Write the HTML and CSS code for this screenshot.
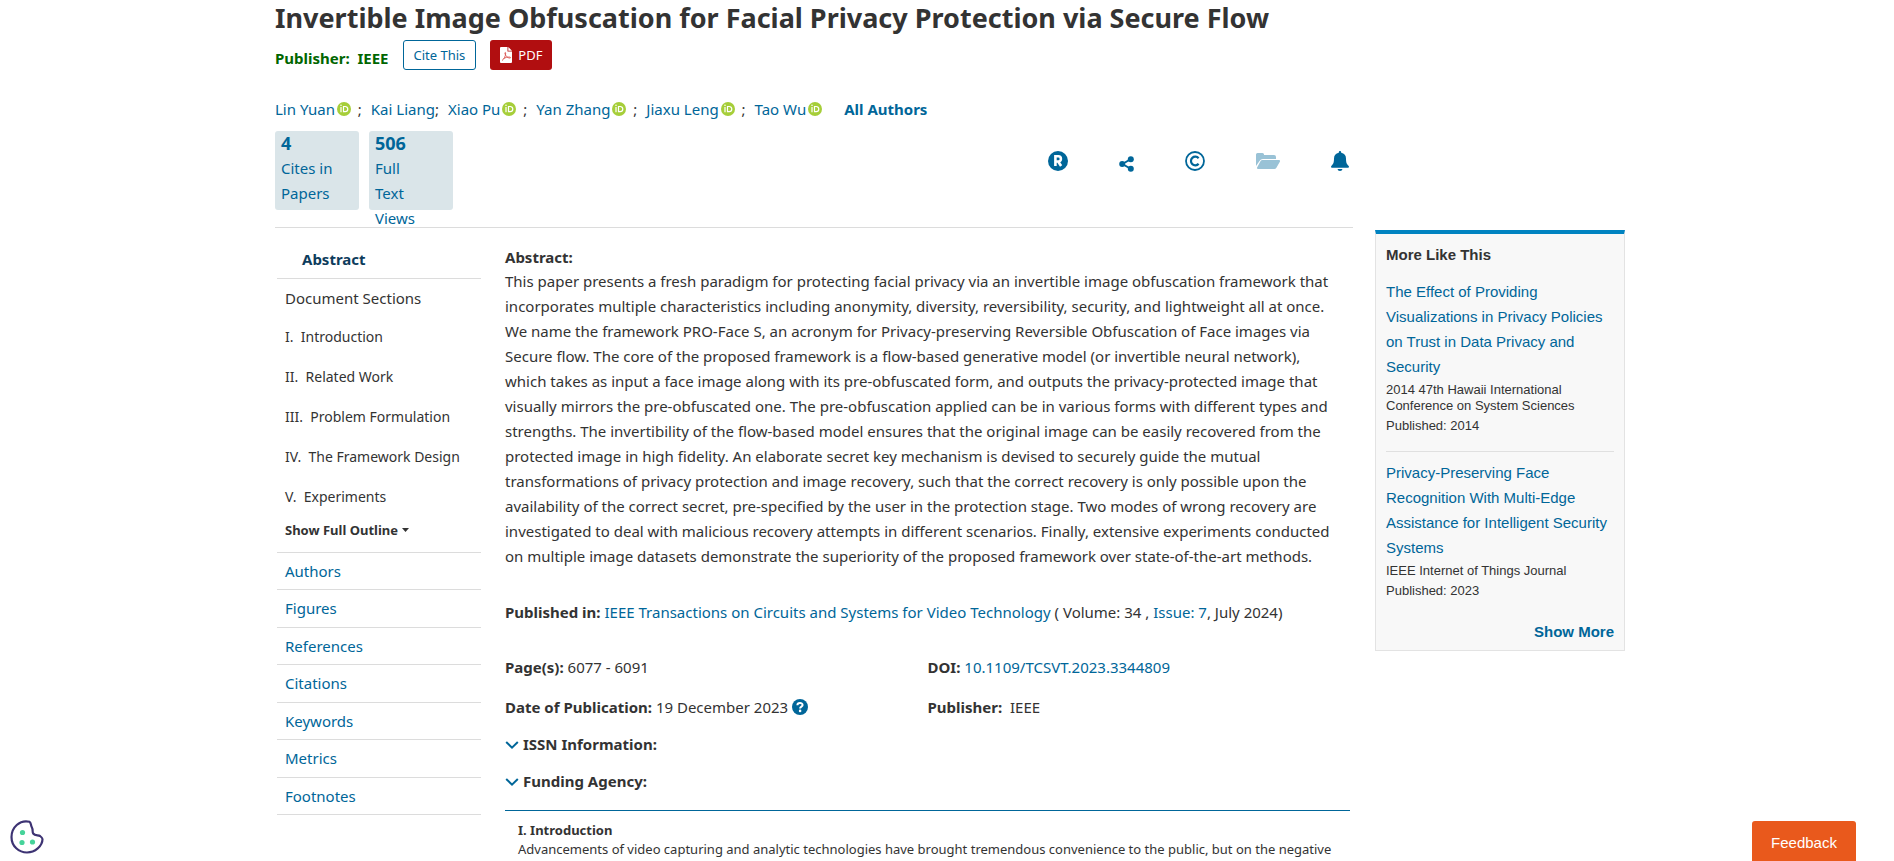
FILE: index.html
```html
<!DOCTYPE html>
<html lang="en">
<head>
<meta charset="utf-8">
<title>Invertible Image Obfuscation for Facial Privacy Protection via Secure Flow</title>
<link rel="stylesheet" href="styles.css">
</head>
<body>
<svg class="defs" aria-hidden="true">
  <symbol id="orcid" viewBox="0 0 16 16">
    <circle cx="8" cy="8" r="7" fill="#a6ce39"/>
    <path d="M5 6v5.200M7.500 5.500h1.700a2.600 2.600 0 0 1 0 5.200H7.500z" fill="none" stroke="#fff" stroke-width="1.200"/>
    <circle cx="5" cy="4.300" r=".8" fill="#fff"/>
  </symbol>
  <symbol id="chevron" viewBox="0 0 14 10">
    <path d="M1.200 2l5.800 5.600L12.800 2" fill="none" stroke="#069" stroke-width="2"/>
  </symbol>
</svg>
<div class="page">
  <header class="doc-head">
    <h1>Invertible Image Obfuscation for Facial Privacy Protection via Secure Flow</h1>
    <div class="publisher-row">
      <span class="publisher">Publisher:&nbsp; IEEE</span>
      <button class="btn btn-cite" type="button">Cite This</button>
      <button class="btn btn-pdf" type="button">
        <svg width="12" height="16" viewBox="0 0 12 16"><path d="M0 1a1 1 0 0 1 1-1h6.500v4.500H12V15a1 1 0 0 1-1 1H1a1 1 0 0 1-1-1z" fill="#fff"/><path d="M8.300 0L12 3.700H8.300z" fill="#fff"/><path d="M2 13.500c1.500-.5 4-5 3.700-7.500-.1-.8-1-.6-.8.300.4 2.500 2.800 4.800 5 4.800.9 0 .8-.9 0-1-2-.2-4.700.5-6.300 1.400" fill="none" stroke="#d9534f" stroke-width=".9"/></svg>
        PDF</button>
    </div>
    <div class="authors">
      <span><a href="#">Lin Yuan</a><svg class="orcid"><use href="#orcid"/></svg> ;</span>
      <span><a href="#">Kai Liang</a>;</span>
      <span><a href="#">Xiao Pu</a><svg class="orcid"><use href="#orcid"/></svg> ;</span>
      <span><a href="#">Yan Zhang</a><svg class="orcid"><use href="#orcid"/></svg> ;</span>
      <span><a href="#">Jiaxu Leng</a><svg class="orcid"><use href="#orcid"/></svg> ;</span>
      <span><a href="#">Tao Wu</a><svg class="orcid"><use href="#orcid"/></svg></span>
      <a class="all-authors" href="#">All Authors</a>
    </div>
  </header>

  <div class="columns">
    <div class="left">
      <div class="metrics-row">
        <div class="metrics">
          <button class="metric" type="button"><b>4</b><span>Cites in</span><span>Papers</span></button>
          <button class="metric" type="button"><b>506</b><span>Full</span><span>Text</span><span>Views</span></button>
        </div>
        <div class="tools">
          <a href="#" aria-label="References"><svg width="20" height="20" viewBox="0 0 20 20"><circle cx="10" cy="10" r="10" fill="#069"/><path d="M7.400 15V5.300h2.900a2.600 2.600 0 0 1 0 5.200H7.400M10.200 10.500l2.900 4.500" fill="none" stroke="#fff" stroke-width="2.600"/></svg></a>
          <a class="share" href="#" aria-label="Share"><svg width="15" height="16" viewBox="0 0 15 16"><path d="M12 3L3.500 8l8.500 5" fill="none" stroke="#069" stroke-width="2"/><circle cx="11.800" cy="3.200" r="3" fill="#069"/><circle cx="3.200" cy="8" r="3" fill="#069"/><circle cx="11.800" cy="12.800" r="3" fill="#069"/></svg></a>
          <a href="#" aria-label="Copyright"><svg width="20" height="20" viewBox="0 0 20 20"><circle cx="10" cy="10" r="9" fill="none" stroke="#069" stroke-width="1.800"/><path d="M13.600 7.300a4.300 4.300 0 1 0 0 5.400" fill="none" stroke="#069" stroke-width="2.200"/></svg></a>
          <a href="#" aria-label="Save to folder"><svg width="24" height="16" viewBox="0 0 24 16"><path d="M0 13V1.500A1.500 1.500 0 0 1 1.500 0h5A1.500 1.500 0 0 1 8 1.500V2h10a2 2 0 0 1 2 2v2H7a4 4 0 0 0-3.500 2z" fill="#99c2d6"/><path d="M6.500 7H23a1 1 0 0 1 1 1.500l-3.600 6.300A2.500 2.500 0 0 1 18.300 16H2a1 1 0 0 1-.9-1.500l3.500-6.400A2.200 2.200 0 0 1 6.500 7z" fill="#99c2d6"/></svg></a>
          <a href="#" aria-label="Alerts"><svg width="18" height="20" viewBox="0 0 18 20"><path d="M9 0a1.200 1.200 0 0 1 1.200 1.200v.5A6 6 0 0 1 15 7.500c0 4.500 1 5.800 2.500 7.200.9.900.4 2.100-.8 2.100H1.300C.1 16.800-.4 15.600.5 14.700 2 13.300 3 12 3 7.500a6 6 0 0 1 4.800-5.800v-.5A1.200 1.200 0 0 1 9 0z" fill="#069"/><path d="M6.500 17.900h5A2.500 2.500 0 0 1 9 20a2.500 2.500 0 0 1-2.500-2.100z" fill="#069"/></svg></a>
        </div>
      </div>

      <div class="body-row">
        <nav class="outline">
          <a class="outline-active" href="#">Abstract</a>
          <div class="sections">
            <div class="sections-title">Document Sections</div>
            <a href="#">I.&nbsp; Introduction</a>
            <a href="#">II.&nbsp; Related Work</a>
            <a href="#">III.&nbsp; Problem Formulation</a>
            <a href="#">IV.&nbsp; The Framework Design</a>
            <a href="#">V.&nbsp; Experiments</a>
            <button class="show-outline" type="button">Show Full Outline<svg width="7" height="4" viewBox="0 0 7 4"><path d="M0 0h7L3.500 4z" fill="#333"/></svg></button>
          </div>
          <div class="links">
            <a href="#">Authors</a>
            <a href="#">Figures</a>
            <a href="#">References</a>
            <a href="#">Citations</a>
            <a href="#">Keywords</a>
            <a href="#">Metrics</a>
            <a href="#">Footnotes</a>
          </div>
        </nav>

        <main class="content">
          <h2>Abstract:</h2>
          <p class="abstract">This paper presents a fresh paradigm for protecting facial privacy via an invertible image obfuscation framework that incorporates multiple characteristics including anonymity, diversity, reversibility, security, and lightweight all at once. We name the framework PRO-Face S, an acronym for Privacy-preserving Reversible Obfuscation of Face images via Secure flow. The core of the proposed framework is a flow-based generative model (or invertible neural network), which takes as input a face image along with its pre-obfuscated form, and outputs the privacy-protected image that visually mirrors the pre-obfuscated one. The pre-obfuscation applied can be in various forms with different types and strengths. The invertibility of the flow-based model ensures that the original image can be easily recovered from the protected image in high fidelity. An elaborate secret key mechanism is devised to securely guide the mutual transformations of privacy protection and image recovery, such that the correct recovery is only possible upon the availability of the correct secret, pre-specified by the user in the protection stage. Two modes of wrong recovery are investigated to deal with malicious recovery attempts in different scenarios. Finally, extensive experiments conducted on multiple image datasets demonstrate the superiority of the proposed framework over state-of-the-art methods.</p>
          <p class="published"><b>Published in:</b> <a href="#">IEEE Transactions on Circuits and Systems for Video Technology</a> ( Volume: 34 , <a href="#">Issue: 7</a>, July 2024)</p>
          <div class="facts">
            <div class="facts-col">
              <p><b>Page(s):</b> 6077 - 6091</p>
              <p><b>Date of Publication:</b> 19 December 2023 <svg class="help" width="16" height="16" viewBox="0 0 16 16"><circle cx="8" cy="8" r="8" fill="#069"/><path d="M5.400 6.200C5.400 3.300 10.600 3.300 10.600 6c0 1.700-2.500 1.500-2.500 3.500" fill="none" stroke="#fff" stroke-width="2"/><circle cx="8.100" cy="11.900" r="1.300" fill="#fff"/></svg></p>
            </div>
            <div class="facts-col">
              <p><b>DOI:</b> <a href="#">10.1109/TCSVT.2023.3344809</a></p>
              <p><b>Publisher:</b>&nbsp; IEEE</p>
            </div>
          </div>
          <button class="expander" type="button"><svg width="14" height="10"><use href="#chevron"/></svg>ISSN Information:</button>
          <button class="expander" type="button"><svg width="14" height="10"><use href="#chevron"/></svg>Funding Agency:</button>
          <section class="intro">
            <h3>I. Introduction</h3>
            <p>Advancements of video capturing and analytic technologies have brought tremendous convenience to the public, but on the negative</p>
          </section>
        </main>
      </div>
    </div>

    <aside class="more">
      <h2>More Like This</h2>
      <article>
        <a href="#">The Effect of Providing Visualizations in Privacy Policies on Trust in Data Privacy and Security</a>
        <p>2014 47th Hawaii International Conference on System Sciences</p>
        <p>Published: 2014</p>
      </article>
      <article>
        <a href="#">Privacy-Preserving Face Recognition With Multi-Edge Assistance for Intelligent Security Systems</a>
        <p>IEEE Internet of Things Journal</p>
        <p>Published: 2023</p>
      </article>
      <a class="show-more" href="#">Show More</a>
    </aside>
  </div>
</div>

<button class="cookie" type="button" aria-label="Cookie settings"><svg width="34" height="34" viewBox="0 0 34 34"><path d="M19.500 1.700C9.500-.5 1.500 7.500 1.500 17S9 32.500 17 32.500s15.500-6.500 15.500-13.500c0-1-.8-1.700-2.500-3-1.700-1.200-5 0-6.800-2.500-1.200-1.700.2-3.500-1.500-6.500C20.500 5 21.500 3.500 19.500 1.700z" fill="#fff" stroke="#3d3373" stroke-width="2.200"/><circle cx="12.500" cy="12.500" r="2.600" fill="#46d39a"/><circle cx="12" cy="22.500" r="2.600" fill="#46d39a"/><circle cx="22.500" cy="22" r="2.600" fill="#46d39a"/></svg></button>
<button class="feedback" type="button">Feedback</button>
</body>
</html>
```
FILE: styles.css
```css
* { box-sizing: border-box; }

body {
  margin: 0;
  height: 100vh;
  overflow: hidden;
  background: #fff;
  color: #333;
  font: 15px/25px "Noto Sans", sans-serif;
}

h1, h2, h3, p { margin: 0; }
h2 { font-size: 15px; }
a { color: #069; text-decoration: none; }
svg { flex: none; }

button {
  margin: 0;
  padding: 0;
  border: 0;
  background: none;
  color: inherit;
  font: inherit;
  text-align: left;
  cursor: pointer;
}

.defs { position: absolute; width: 0; height: 0; }

.page {
  max-width: 1356px;
  margin: 0 auto;
  padding-left: 6px;
}

h1 { font-size: 27px; line-height: 36px; }

.publisher-row {
  display: flex;
  gap: 14px;
  padding-top: 4px;
}
.publisher {
  padding-top: 6px;
  color: #060;
  font-weight: bold;
}
.btn {
  height: 30px;
  padding: 0 10px;
  border-radius: 3px;
  font-size: 13px;
  line-height: 28px;
}
.btn-cite { border: 1px solid #069; color: #069; line-height: 26px; }
.btn-pdf {
  display: flex;
  align-items: center;
  gap: 6px;
  background: #b10e10;
  color: #fff;
}

.authors {
  display: flex;
  gap: 9px;
  padding: 26px 0 9px;
}
.orcid {
  width: 16px;
  height: 16px;
  margin: 0 2px 0 1px;
  vertical-align: -2px;
}
.all-authors { margin-left: 10px; font-weight: bold; }

.columns { display: flex; align-items: flex-start; gap: 22px; }
.left { flex: 1; }

.metrics-row {
  display: flex;
  justify-content: space-between;
  height: 97px;
  border-bottom: 1px solid #dcdcdc;
}
.metrics { display: flex; gap: 10px; }
.metric {
  display: flex;
  flex-direction: column;
  width: 84px;
  height: 79px;
  padding-left: 6px;
  border-radius: 3px;
  background: #dae5e9;
  color: #069;
}
.metric b { font-size: 18px; }

.tools {
  display: flex;
  align-items: center;
  gap: 51px;
  padding: 0 4px 36px 0;
}
.share { padding-top: 6px; }
.tools a { display: flex; }

.body-row { display: flex; gap: 24px; padding-left: 2px; }

.outline { width: 204px; padding-top: 19px; }
.outline-active {
  display: block;
  height: 32px;
  padding-left: 25px;
  border-bottom: 1px solid #dcdcdc;
  color: #0d3c5c;
  font-weight: bold;
}
.sections {
  display: flex;
  flex-direction: column;
  padding: 0 0 9px 8px;
  border-bottom: 1px solid #dcdcdc;
}
.sections-title { line-height: 38px; }
.sections a { color: #333; font-size: 14px; line-height: 40px; }
.show-outline {
  display: flex;
  align-items: center;
  gap: 4px;
  font-size: 13px;
  font-weight: bold;
  line-height: 26px;
}
.links {
  display: grid;
  grid-auto-rows: 1fr;
  height: 262px;
}
.links a {
  padding-left: 8px;
  border-bottom: 1px solid #dcdcdc;
  line-height: 36px;
}

.content { flex: 1; min-width: 0; padding: 17px 3px 0 0; }
.content > h2 { line-height: 24px; }
.abstract { padding-right: 14px; }
.published { padding: 31px 0 30px; }
.facts { display: flex; }
.facts-col { width: 50%; display: flex; flex-direction: column; gap: 15px; }
.help { vertical-align: -2px; }
.expander {
  display: flex;
  align-items: center;
  gap: 4px;
  padding-top: 12px;
  font-weight: bold;
}
.intro {
  margin-top: 16px;
  padding: 10px 13px 0;
  border-top: 1px solid #069;
  font-size: 13px;
  line-height: 19px;
}
.intro h3 { font-size: 13px; }

.more {
  width: 250px;
  margin-top: 99px;
  padding: 8px 10px 6px;
  border: 1px solid #e3e3e3;
  border-top: 4px solid #0083c1;
  background: #f8f8f8;
  font-family: "Liberation Sans", Arial, sans-serif;
}
.more h2 { font-size: 15px; }
.more article { padding: 12px 0 14px; }
.more article + article { border-top: 1px solid #e0e0e0; padding-top: 8px; }
.more p { padding: 3px 0; font-size: 13px; line-height: 16px; }
.more article p + p { padding-top: 1px; }
.show-more { display: block; margin-top: 3px; font-weight: bold; text-align: right; }

.cookie { position: fixed; left: 10px; bottom: 7px; height: 34px; }
.feedback {
  position: fixed;
  right: 38px;
  bottom: 0;
  width: 104px;
  height: 40px;
  padding-top: 4px;
  border-radius: 3px 3px 0 0;
  background: #e9591c;
  color: #fff;
  font: 15px/36px "Liberation Sans", Arial, sans-serif;
  text-align: center;
}
```
